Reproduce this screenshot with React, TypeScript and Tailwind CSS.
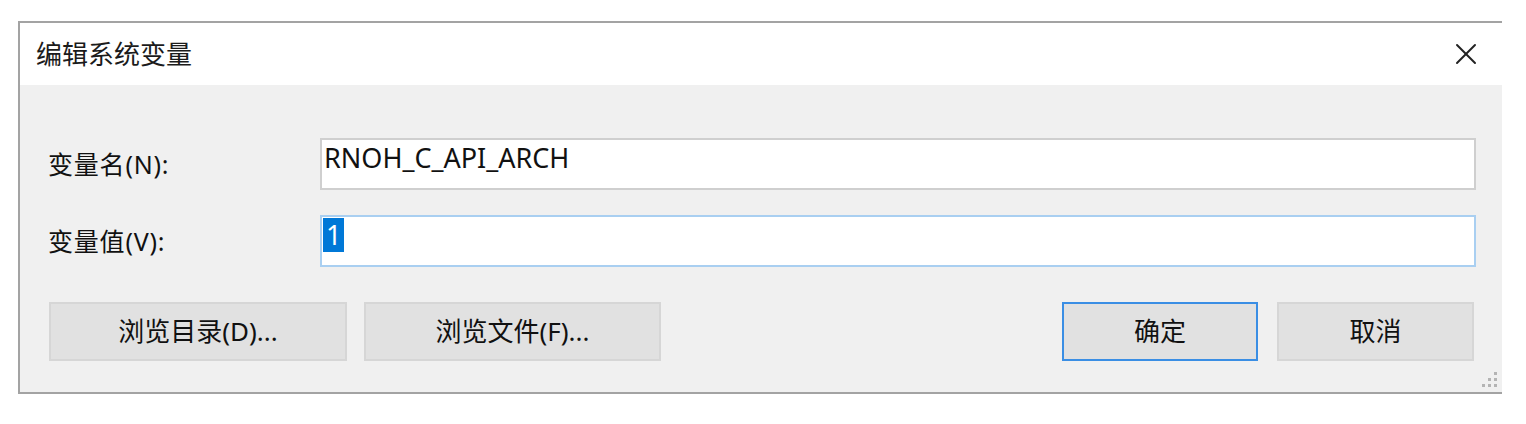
import { X } from 'lucide-react';

const font = "font-['Noto_Sans','Noto_Sans_CJK_SC',sans-serif]";

function Field({ label, children, focused }: { label: string; children: React.ReactNode; focused?: boolean }) {
  return (
    <div className="flex items-center h-[52px]">
      <div className="w-[272px] text-[25px] tracking-[0.8px] text-[#111] leading-none">{label}</div>
      <div
        className={
          focused
            ? 'flex-1 h-[52px] bg-white border-2 border-[#a9cff1] px-[1px] pt-[1px] text-[27px] leading-[34px] text-[#111]'
            : 'flex-1 h-[52px] bg-white border-2 border-[#cfcfcf] px-[2px] pt-[1px] text-[27px] leading-[34px] text-[#111]'
        }
      >
        {children}
      </div>
    </div>
  );
}

function Btn({ children, w, primary }: { children: React.ReactNode; w: string; primary?: boolean }) {
  return (
    <div
      className={
        (primary ? 'border-[#3a8ee4] ' : 'border-[#d6d6d6] ') +
        w +
        ' h-[59px] border-2 bg-[#e1e1e1] flex items-center justify-center text-[26px] text-[#111]'
      }
    >
      {children}
    </div>
  );
}

export default function App() {
  return (
    <div className={`min-h-[424px] bg-white pt-[21px] pl-[18px] ${font}`}>
      <div className="w-[1484px] border-l-2 border-t-2 border-b-2 border-[#a3a3a3] flex flex-col">
        {/* Title bar */}
        <div className="h-[62px] bg-white flex items-center justify-between pl-[16px] pr-[18px]">
          <span className="text-[26px] text-[#1b1b1b] leading-none">编辑系统变量</span>
          <X className="w-[36px] h-[36px] text-[#222]" strokeWidth={1.3} />
        </div>

        {/* Body */}
        <div className="relative h-[307px] bg-[#f0f0f0] pl-[28px] pr-[26px] pt-[53px]">
          <Field label="变量名(N):">RNOH_C_API_ARCH</Field>
          <div className="mt-[25px]">
            <Field label="变量值(V):" focused>
              <span className="bg-[#0078d7] text-white px-[3px] inline-block leading-[34px]">1</span>
            </Field>
          </div>

          <div className="mt-[35px] flex items-center pl-[1px] pr-[2px]">
            <Btn w="w-[298px]">浏览目录(D)...</Btn>
            <div className="ml-[17px]">
              <Btn w="w-[297px]">浏览文件(F)...</Btn>
            </div>
            <div className="flex-1" />
            <Btn w="w-[196px]" primary>
              确定
            </Btn>
            <div className="ml-[19px]">
              <Btn w="w-[197px]">取消</Btn>
            </div>
          </div>

          {/* Resize grip */}
          <div className="absolute right-[5px] bottom-[5px] grid grid-cols-3 gap-[3px]">
            <span className="w-[3px] h-[3px]" />
            <span className="w-[3px] h-[3px]" />
            <span className="w-[3px] h-[3px] bg-[#b4b4b4]" />
            <span className="w-[3px] h-[3px]" />
            <span className="w-[3px] h-[3px] bg-[#b4b4b4]" />
            <span className="w-[3px] h-[3px] bg-[#b4b4b4]" />
            <span className="w-[3px] h-[3px] bg-[#b4b4b4]" />
            <span className="w-[3px] h-[3px] bg-[#b4b4b4]" />
            <span className="w-[3px] h-[3px] bg-[#b4b4b4]" />
          </div>
        </div>
      </div>
    </div>
  );
}
